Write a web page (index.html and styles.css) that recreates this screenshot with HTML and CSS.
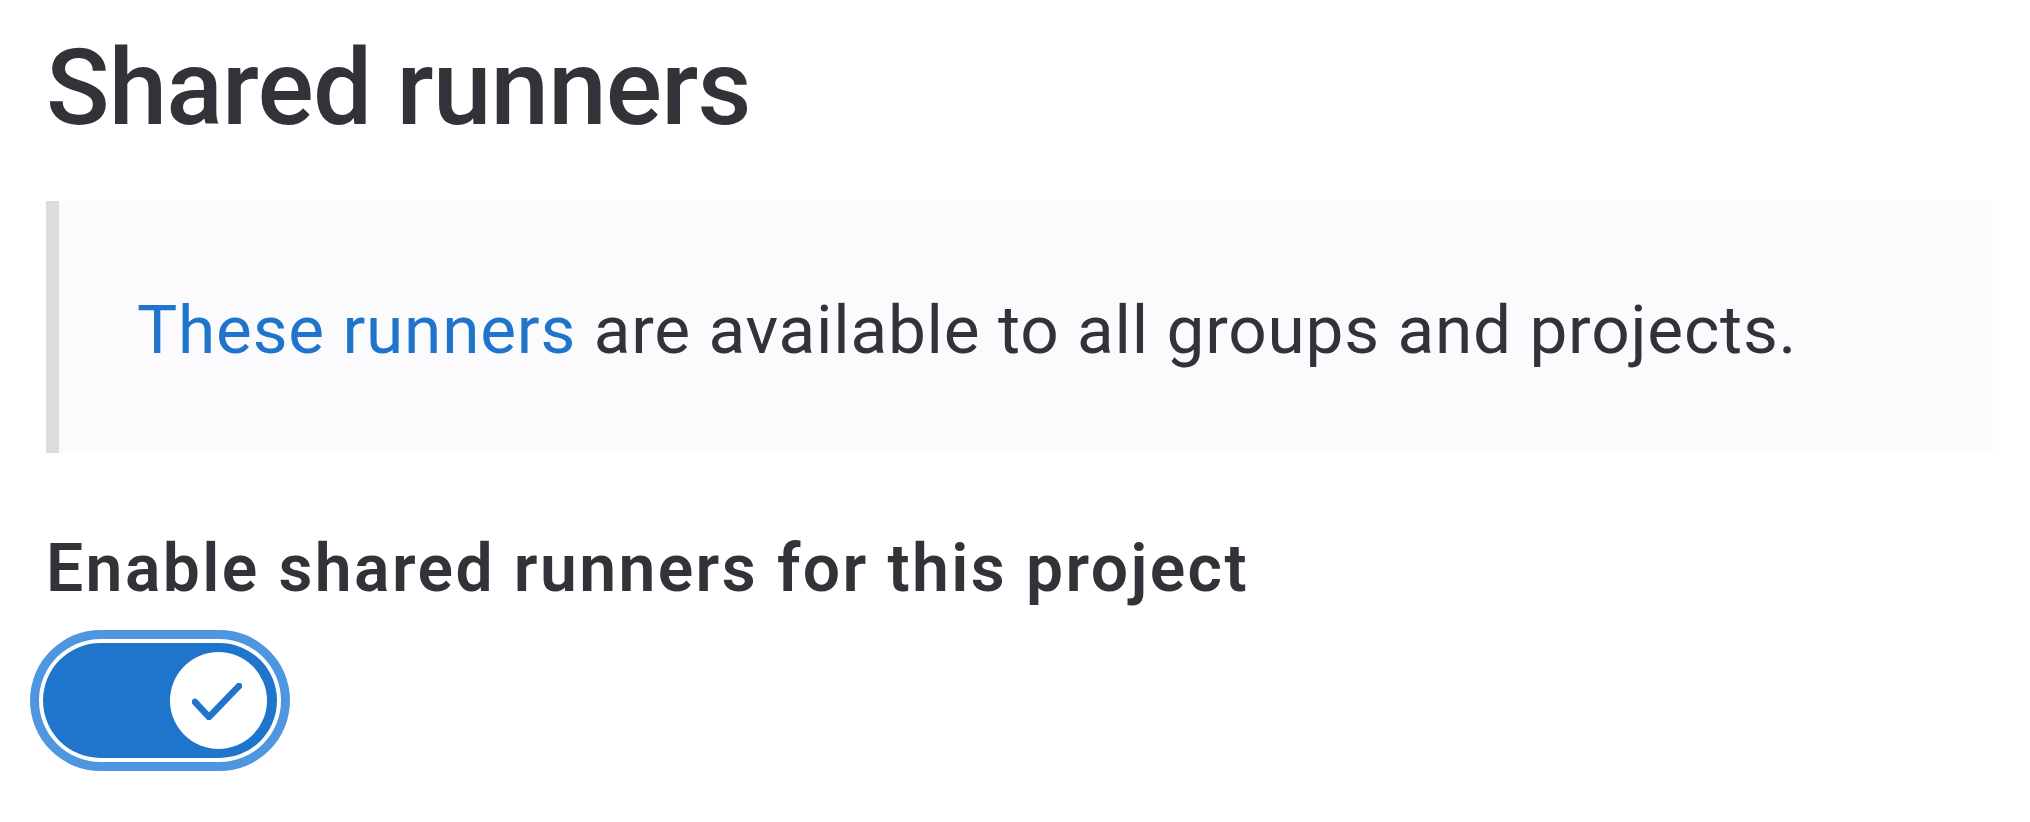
FILE: index.html
```html
<!DOCTYPE html>
<html lang="en">
<head>
  <meta charset="UTF-8" />
  <meta name="viewport" content="width=device-width, initial-scale=1.0"/>
  <title>Shared runners</title>
  <link rel="stylesheet" href="styles.css">
</head>
<body>

<section class="settings">
  <h2 class="settings-title">Shared runners</h2>

  <div class="callout">
    <p><a href="#" class="callout-link">These runners</a> are available to all groups and projects.</p>
  </div>

  <label class="toggle-label" for="shared-toggle">Enable shared runners for this project</label>
  <button class="toggle is-checked" id="shared-toggle" role="switch" aria-checked="true">
    <span class="toggle-knob">
      <svg width="50" height="37" viewBox="0 0 50 37" aria-hidden="true">
        <polyline points="3,19 17,34 47,3" fill="none" stroke="#1f75cb" stroke-width="6.5" stroke-linecap="round" stroke-linejoin="round"/>
      </svg>
    </span>
  </button>
</section>

</body>
</html>
```

FILE: styles.css
```css
body, html {
  margin: 0;
  padding: 0;
  background: #fff;
  font-family: Roboto, 'Noto Sans', sans-serif;
  color: #333238;
}

.settings {
  min-height: 822px;
  box-sizing: border-box;
  padding: 0 37px 0 46px;
}

.settings-title {
  margin: 26px 0 49px;
  font-size: 105px;
  font-weight: 500;
  line-height: 126px;
  letter-spacing: -0.8px;
}

.callout {
  background: #fbfafd;
  border-left: 13px solid #dcdcde;
  padding: 78px 78px 73px;
}

.callout p {
  margin: 0;
  font-size: 67.5px;
  line-height: 101px;
  letter-spacing: 0.8px;
}

.callout-link {
  color: #1f75cb;
  text-decoration: none;
}

.toggle-label {
  display: block;
  margin-top: 66px;
  font-size: 66px;
  font-weight: 600;
  line-height: 99px;
  letter-spacing: 2.4px;
}

.toggle {
  display: flex;
  align-items: center;
  justify-content: flex-end;
  width: 234px;
  height: 115px;
  margin: 25px 0 0 -3px;
  padding: 0 10px;
  border: none;
  border-radius: 58px;
  background: #1f75cb;
  box-shadow: 0 0 0 4px #fff, 0 0 0 13px #4f96e0;
  cursor: pointer;
}

.toggle-knob {
  display: flex;
  align-items: center;
  justify-content: center;
  width: 97px;
  height: 97px;
  border-radius: 50%;
  background: #fff;
}

.toggle-knob svg {
  margin: 2px 4px 0 0;
}
```
